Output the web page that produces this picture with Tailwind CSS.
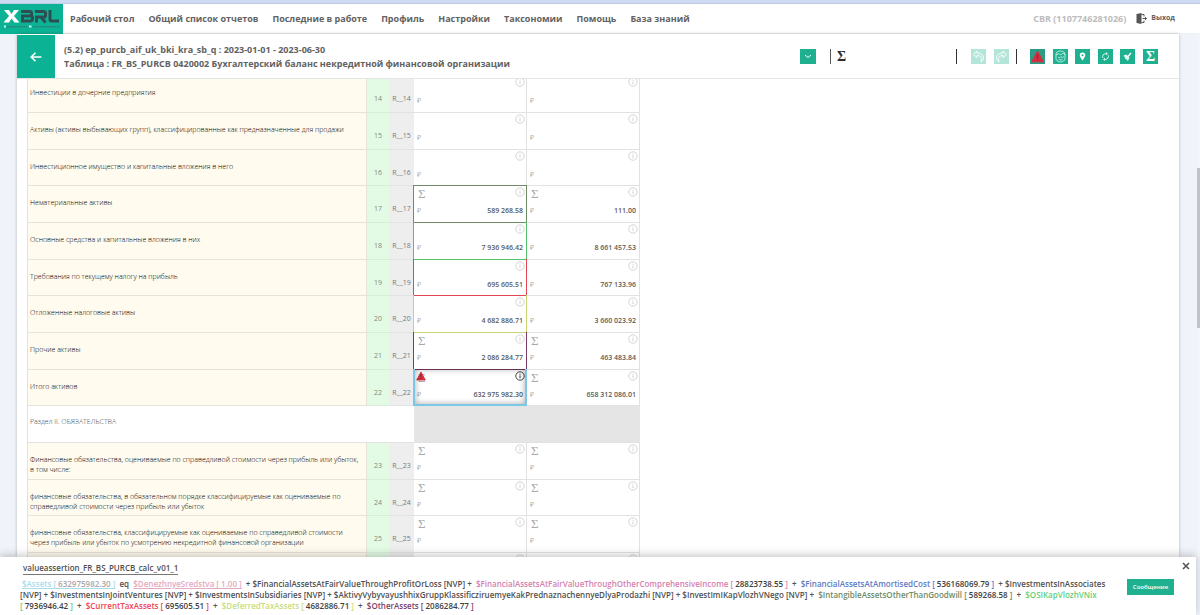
<!DOCTYPE html>
<html lang="ru">
<head>
<meta charset="utf-8">
<meta name="viewport" content="width=device-width, initial-scale=1">
<title>XBRL — Бухгалтерский баланс</title>
<script src="https://cdn.jsdelivr.net/npm/@tailwindcss/browser@4"></script>
</head>
<body class="flex h-screen flex-col overflow-hidden bg-[#f0f4fa] font-['Open_Sans','Noto_Sans',sans-serif] text-[#626262]">

<svg class="hidden" aria-hidden="true">
  <symbol id="info" viewBox="0 0 10 10"><circle cx="5" cy="5" r="4.200" fill="none" stroke="currentColor" stroke-width=".9"/><path d="M5 4.400v2.800M5 2.700v1" stroke="currentColor" stroke-width="1"/></symbol>
  <symbol id="warn" viewBox="0 0 12 12"><path d="M6 1.200 11.200 10.800H.8z" fill="#d32f3f" stroke="#d32f3f" stroke-width="1" stroke-linejoin="round"/><path d="M6 4v3.600M6 8.600v1.200" stroke="#7d3038" stroke-width="1.100"/></symbol>
</svg>

<div class="h-1 shrink-0 border-b border-[#bccae3] bg-[#cfdbf2]"></div>

<header class="flex h-[30px] shrink-0 items-center border-b border-[#eef0f3] bg-white">
  <a href="#" aria-label="XBRL" class="block h-[30px] w-[63px] shrink-0 bg-[#0cb294]">
    <svg viewBox="0 0 63 30" class="h-full w-full" aria-hidden="true">
      <path d="M4 6h5l2.500 4L14 6h5l-5 6 5.500 6.500h-5L11.500 14.500 9 18.500H3.500L9 12z" fill="#fff"/>
      <g fill="none" stroke="#2d4f54" stroke-width="3">
        <path d="M21 7.500h8.500q2 0 2 1.500v1.500q0 1.500-1.500 1.500h-7M30 12q2.500 0 2.500 1.600v1.500q0 1.900-2.500 1.900h-7.500V10.500"/>
        <path d="M36.500 18.500V14M35 7.500h8.500q2 0 2 1.500v2.400q0 1.600-2 1.600H35M41 13l4.500 5.500"/>
        <path d="M50 6v9.500q0 1.500 1.500 1.500H59"/>
      </g>
      <path d="M4 22.500h2M29 22.500h2.500" stroke="#c9f5ea" stroke-width="2"/>
      <path d="M7 22.700h20M33 22.700h27" stroke="#2b7f78" stroke-width="1.600" stroke-dasharray="1.600 .8"/>
    </svg>
  </a>
  <nav class="ml-[7px] flex gap-[14px] whitespace-nowrap text-[9px] leading-[14px] font-bold">
    <a href="#">Рабочий стол</a>
    <a href="#">Общий список отчетов</a>
    <a href="#">Последние в работе</a>
    <a href="#">Профиль</a>
    <a href="#">Настройки</a>
    <a href="#">Таксономии</a>
    <a href="#">Помощь</a>
    <a href="#">База знаний</a>
  </nav>
  <div class="mr-[25px] ml-auto flex items-center whitespace-nowrap font-bold">
    <span class="text-[9px] leading-[14px] text-[#bdbdbd]">CBR (1107746281026)</span>
    <a href="#" class="ml-[10px] flex items-center gap-1 text-[7px]">
      <svg viewBox="0 0 11 11" class="h-[11px] w-[11px]" aria-hidden="true"><path d="M.5 1 5.500 0v11L.5 10z" fill="#555"/><path d="M5.500 1.500H8v2M5.500 9.500H8v-2M6.500 5.500h4M9 4l1.600 1.500L9 7" fill="none" stroke="#555"/></svg>
      Выход
    </a>
  </div>
</header>

<div class="flex min-h-0 flex-1">
<main class="ml-[17px] flex min-h-0 flex-1 flex-col bg-white pt-px shadow-[0_0_3px_rgba(0,0,0,0.25)]">
  <section class="flex h-[44px] shrink-0 items-center border-b border-[#e4e4e4]">
    <button type="button" aria-label="Назад" class="flex h-[43px] w-[38px] shrink-0 items-center justify-center bg-[#0cb294] text-white">
      <svg viewBox="0 0 12 10" class="h-[10px] w-3" fill="none" stroke="currentColor" stroke-width="1.600" aria-hidden="true"><path d="M5.500.8 1.200 5l4.300 4.200M1.400 5h10"/></svg>
    </button>
    <h1 class="ml-[9px] whitespace-nowrap text-[9px] leading-[14px] font-bold">(5.2) ep_purcb_aif_uk_bki_kra_sb_q : 2023-01-01 - 2023-06-30<br>Таблица : FR_BS_PURCB 0420002 Бухгалтерский баланс некредитной финансовой организации</h1>

    <div class="mr-[21px] ml-auto flex items-center text-white">
      <button type="button" aria-label="Развернуть" class="flex h-[15px] w-4 items-center justify-center bg-[#1fb18f]">
        <svg viewBox="0 0 8 5" class="h-[5px] w-2" fill="none" stroke="currentColor" aria-hidden="true"><path d="M1 1l3 2.500L7 1"/></svg>
      </button>
      <span class="ml-[14px] h-[15px] w-px bg-[#555]"></span>
      <span class="ml-[6px] w-[119px] font-['Liberation_Serif',serif] text-[14px] leading-[15px] font-bold text-[#2b2b2b]">Σ</span>
      <span class="h-[15px] w-px bg-[#333]"></span>
      <div class="ml-[14px] flex gap-2">
        <button type="button" disabled aria-label="Отменить" class="h-[15px] w-[15px] bg-[#b3e5d8]">
          <svg viewBox="0 0 15 15" fill="none" stroke="#fff" stroke-width=".9" aria-hidden="true"><path d="M6 2 2.500 5.300 6 8.600V6.500c3 0 4.500 1 4.500 3.200L10 13c2-1.500 2.800-3.200 2.500-5C12 5.500 9.500 4 6 4z"/></svg>
        </button>
        <button type="button" disabled aria-label="Повторить" class="h-[15px] w-[15px] bg-[#b3e5d8]">
          <svg viewBox="0 0 15 15" fill="none" stroke="#fff" stroke-width=".9" aria-hidden="true"><path d="M9 2l3.500 3.300L9 8.600V6.500c-3 0-4.500 1-4.500 3.200L5 13c-2-1.500-2.800-3.200-2.500-5C3 5.500 5.500 4 9 4z"/></svg>
        </button>
      </div>
      <span class="ml-[7px] h-[15px] w-px bg-[#333]"></span>
      <div class="ml-[13px] flex w-[128px] justify-between">
        <button type="button" aria-label="Ошибки" class="h-[15px] w-[15px] bg-[#2b9c85] p-px"><svg class="h-[13px] w-[13px]" aria-hidden="true"><use href="#warn"/></svg></button>
        <button type="button" aria-label="Просмотр" class="h-[15px] w-[15px] bg-[#1fb18f]">
          <svg viewBox="0 0 15 15" fill="none" stroke="#d9f5ec" stroke-width=".8" aria-hidden="true"><path d="M3 5.500C3 3 5 2 7.500 2S12 3 12 5.500v4c0 2-2 3.500-4.500 3.500S3 11.500 3 9.500zM3 6l3-1.500L7.500 6l3-2L12 6M5 8l1.500 1L8 7.500l1.500 1.200L11 7.500M5.500 10.800h4"/></svg>
        </button>
        <button type="button" aria-label="Метка" class="h-[15px] w-[15px] bg-[#1fb18f]">
          <svg viewBox="0 0 15 15" aria-hidden="true"><path fill-rule="evenodd" d="M7.500 3.500a2.700 2.700 0 0 0-2.700 2.800C4.800 8.300 7.500 11.500 7.500 11.500s2.700-3.200 2.700-5.200a2.700 2.700 0 0 0-2.700-2.800zm0 1.700a1 1 0 1 1 0 2.100 1 1 0 0 1 0-2.100z" fill="#fff"/></svg>
        </button>
        <button type="button" aria-label="Обновить" class="h-[15px] w-[15px] bg-[#1fb18f]">
          <svg viewBox="0 0 15 15" fill="none" stroke="#e3f8f1" aria-hidden="true"><path d="M4.800 8.800A3 3 0 0 1 7.500 4.700H9M10.200 6.300a3 3 0 0 1-2.700 4.100H6M8.200 3.400l1.200 1.300-1.200 1.300M6.800 9.100l-1.200 1.300 1.200 1.300"/></svg>
        </button>
        <button type="button" aria-label="Очистить" class="h-[15px] w-[15px] bg-[#1fb18f]">
          <svg viewBox="0 0 15 15" aria-hidden="true"><path d="M3.500 6.500l3-1 3 3.300-1.500 3-1.500-.8.300-1.200-1.200.4L4.700 9l.8-.9-1.500-.3z" fill="#e3f8f1"/><path d="M8 7.500l3-3.500" stroke="#fff" stroke-width="1.300"/></svg>
        </button>
        <button type="button" aria-label="Сумма" class="h-[15px] w-[15px] bg-[#1fb18f] text-center font-['Liberation_Serif',serif] text-[14px] leading-[15px] font-bold">Σ</button>
      </div>
    </div>
  </section>

  <div class="min-h-0 flex-1 overflow-hidden pl-[10px]">
    <table class="-mt-[3px] w-[613px] table-fixed border-separate border-spacing-0 border-l border-[#e2e2e2] text-[7px] leading-[10px]">
      <colgroup><col class="w-[339px]"><col class="w-[22px]"><col class="w-[25px]"><col class="w-[113px]"><col class="w-[113px]"></colgroup>
      <tbody id="rows"></tbody>
    </table>
  </div>
</main>

<aside class="ml-[18px] flex w-[3px] flex-col bg-[#f4f5f7]" aria-hidden="true">
  <div class="mt-[134px] h-[160px] bg-[#c1c3c6]"></div>
</aside>
</div>

<footer class="relative z-10 mr-1 h-[58px] shrink-0 bg-white pr-1 pl-5 font-semibold text-[#505050] shadow-[0_-2px_8px_rgba(0,0,0,0.22)]">
  <div class="flex items-start justify-between pt-1">
    <a href="#" class="ml-[3px] border-b border-[#777] text-[8px] leading-[13px]">valueassertion_FR_BS_PURCB_calc_v01_1</a>
    <button type="button" aria-label="Закрыть" class="mr-px p-px text-[#555]"><svg viewBox="0 0 8 8" class="h-2 w-2" stroke="currentColor" stroke-width="1.600" aria-hidden="true"><path d="M1 1l6 6M7 1 1 7"/></svg></button>
  </div>
  <div class="flex justify-between">
    <div class="mt-[3px] whitespace-nowrap text-[8px] leading-[11px]">
      <p class="pl-0.5"><a href="#" class="text-[#a9dcea] underline">$Assets [ <span class="text-[#a8a8a8]">632975982.30</span> ]</a>&nbsp; eq &nbsp;<a href="#" class="text-[#e3a9c0] underline">$DenezhnyeSredstva [ 1.00 ]</a>&nbsp; + $FinancialAssetsAtFairValueThroughProfitOrLoss [NVP] + &nbsp;<span class="text-[#d57fae]">$FinancialAssetsAtFairValueThroughOtherComprehensiveIncome [ <span class="text-[#404040]">28823738.55</span> ]</span>&nbsp; + &nbsp;<span class="text-[#5d7bc4]">$FinancialAssetsAtAmortisedCost [ <span class="text-[#404040]">536168069.79</span> ]</span>&nbsp; + $InvestmentsInAssociates</p>
      <p>[NVP] + $InvestmentsInJointVentures [NVP] + $InvestmentsInSubsidiaries [NVP] + $AktivyVybyvayushhixGruppKlassificziruemyeKakPrednaznachennyeDlyaProdazhi [NVP] + $InvestImIKapVlozhVNego [NVP] + &nbsp;<span class="text-[#6f8b66]">$IntangibleAssetsOtherThanGoodwill [ <span class="text-[#404040]">589268.58</span> ]</span>&nbsp; + &nbsp;<span class="text-[#62cf7c]">$OSIKapVlozhVNix</span></p>
      <p><span class="text-[#62cf7c]">[ <span class="text-[#404040]">7936946.42</span> ]</span>&nbsp; + &nbsp;<span class="text-[#ee4450]">$CurrentTaxAssets [ <span class="text-[#404040]">695605.51</span> ]</span>&nbsp; + &nbsp;<span class="text-[#c9dd80]">$DeferredTaxAssets [ <span class="text-[#404040]">4682886.71</span> ]</span>&nbsp; + &nbsp;<span class="text-[#7d4068]">$OtherAssets [ <span class="text-[#404040]">2086284.77</span> ]</span></p>
    </div>
    <button type="button" class="mt-1 mr-[18px] h-4 w-[47px] shrink-0 bg-[#1fb18f] text-[6px] leading-4 text-white">Сообщение</button>
  </div>
</footer>

<script>
// Balance sheet rows: [number, label, first value, second value, shows Σ in both cells, frame of the first cell]
const data = [
  [14, 'Инвестиции в дочерние предприятия', '', '', false, ''],
  [15, 'Активы (активы выбывающих групп), классифицированные как предназначенные для продажи', '', '', false, ''],
  [16, 'Инвестиционное имущество и капитальные вложения в него', '', '', false, ''],
  [17, 'Нематериальные активы', '589 268.58', '111.00', true, 'border border-[#6f8b66]'],
  [18, 'Основные средства и капитальные вложения в них', '7 936 946.42', '8 661 457.53', false, 'border-x border-b border-[#55c06d]'],
  [19, 'Требования по текущему налогу на прибыль', '695 605.51', '767 133.96', false, 'border-x border-b border-[#e24650]'],
  [20, 'Отложенные налоговые активы', '4 682 886.71', '3 660 023.92', false, 'border-x border-b border-[#c5d673]'],
  [21, 'Прочие активы', '2 086 284.77', '463 483.84', true, 'border-x border-b border-[#7d3b68]'],
  [22, 'Итого активов', '632 975 982.30', '658 312 086.01', true, 'border-x-2 border-b-2 border-[#7cc6e6] shadow-[inset_0_0_6px_rgba(0,0,0,0.35)]'],
  [null, 'Раздел II. ОБЯЗАТЕЛЬСТВА'],
  [23, 'Финансовые обязательства, оцениваемые по справедливой стоимости через прибыль или убыток,<br>в том числе:', '', '', true, ''],
  [24, 'финансовые обязательства, в обязательном порядке классифицируемые как оцениваемые по<br>справедливой стоимости через прибыль или убыток', '', '', true, ''],
  [25, 'финансовые обязательства, классифицируемые как оцениваемые по справедливой стоимости<br>через прибыль или убыток по усмотрению некредитной финансовой организации', '', '', true, ''],
  ['', '', '', '', false, ''],
];

const cell = (value, sum, frame, alert, empty) => `
  <td class="relative border-r border-b border-[#e2e2e2] bg-white p-0 align-top">
    ${frame ? `<div class="pointer-events-none absolute -inset-px z-10 ${frame}"></div>` : ''}
    <div class="flex h-[20px] items-start justify-between pt-px pr-px pl-1">
      <span class="relative font-['Liberation_Serif',serif] text-[13px] leading-[14px] text-[#a9a9a9]">${sum ? 'Σ' : ''}${alert ? '<svg class="absolute -left-0.5 top-0 h-[10px] w-[10px]"><use href="#warn"/></svg>' : ''}</span>
      <svg class="h-[10px] w-[10px] ${alert ? 'text-[#333]' : 'text-[#cfcfcf]'}"><use href="#info"/></svg>
    </div>
    <div class="flex justify-between pr-[3px] pl-[3px]">
      <span class="text-[#b0b0b0]">${empty ? '' : '₽'}</span><span class="font-semibold text-[#5a5a5a]">${value}</span>
    </div>
  </td>`;

document.getElementById('rows').innerHTML = data.map(([n, label, a, b, sum, frame]) => n === null ? `
  <tr class="h-[37px] [&:nth-child(3n)]:h-[36px]">
    <td colspan="3" class="border-b border-[#e2e2e2] p-0 pt-[11px] pl-0.5 align-top font-light text-[#444]">${label}</td>
    <td colspan="2" class="border-b border-[#e2e2e2] bg-[#e5e5e5] p-0"></td>
  </tr>` : `
  <tr class="h-[37px] [&:nth-child(3n)]:h-[36px]">
    <th scope="row" class="border-r border-b border-[#e6e4d8] bg-[#fffbee] p-0 pt-3 pl-0.5 text-left align-top font-light whitespace-nowrap text-black">${label}</th>
    <td class="border-b border-[#d9ecd9] bg-[#e3fbe5] p-0 pt-[18px] text-center align-top text-[#7f8a7f]">${n}</td>
    <td class="border-b border-[#e2e2e2] bg-[#eeeeee] p-0 pt-[18px] text-center align-top text-[#777]">${n ? 'R__' + n : ''}</td>
    ${cell(a, sum, frame, n === 22, n === '')}${cell(b, sum, '', false, n === '')}
  </tr>`).join('');
</script>
</body>
</html>
